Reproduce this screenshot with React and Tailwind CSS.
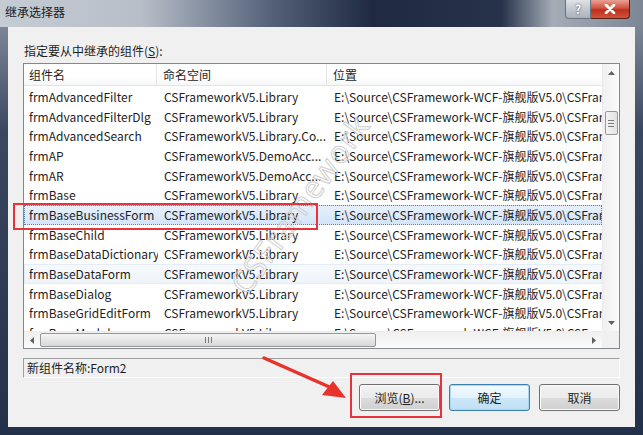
import React from 'react';

const rows = [
  ['frmAdvancedFilter', 'CSFrameworkV5.Library'],
  ['frmAdvancedFilterDlg', 'CSFrameworkV5.Library'],
  ['frmAdvancedSearch', 'CSFrameworkV5.Library.Co...'],
  ['frmAP', 'CSFrameworkV5.DemoAcc...'],
  ['frmAR', 'CSFrameworkV5.DemoAcc...'],
  ['frmBase', 'CSFrameworkV5.Library'],
  ['frmBaseBusinessForm', 'CSFrameworkV5.Library'],
  ['frmBaseChild', 'CSFrameworkV5.Library'],
  ['frmBaseDataDictionary', 'CSFrameworkV5.Library'],
  ['frmBaseDataForm', 'CSFrameworkV5.Library'],
  ['frmBaseDialog', 'CSFrameworkV5.Library'],
  ['frmBaseGridEditForm', 'CSFrameworkV5.Library'],
  ['frmBaseModule', 'CSFrameworkV5.Library'],
];

const path = 'E:\\Source\\CSFramework-WCF-旗舰版V5.0\\CSFramework\\';

const Button = ({ children, focused }) => (
  <div
    className={`w-[81px] h-[27px] rounded-[3px] border flex items-center justify-center text-[12px] text-[#1e1e1e] ${
      focused
        ? 'border-[#3c7fb1] bg-[linear-gradient(180deg,#f4fbff_0%,#e3f2fc_50%,#cde7f8_51%,#bfe0f6_100%)] shadow-[inset_0_0_0_1px_#a7d8f5]'
        : 'border-[#707070] bg-[linear-gradient(180deg,#f2f2f2_0%,#ebebeb_50%,#dddddd_51%,#cfcfcf_100%)] shadow-[inset_0_0_0_1px_#fbfbfb]'
    }`}
  >
    {children}
  </div>
);

const App = () => {
  return (
    <div className="relative w-[643px] h-[435px] overflow-hidden bg-[linear-gradient(180deg,#8c96a4_0%,#3a4760_30%,#22304a_100%)] flex flex-col font-['Noto_Sans_CJK_SC','Noto_Sans',sans-serif]">
      {/* title bar */}
      <div className="h-[27px] flex items-start bg-[linear-gradient(90deg,#c6ccd4_0%,#b7bec8_22%,#55627a_42%,#1f2a42_58%,#27334b_78%,#a4acb6_86%,#7c8694_100%)]">
        <div className="pl-[5px] pt-[4px] text-[12px] leading-[16px] text-[#1a1a1a]">继承选择器</div>
        <div className="flex-1" />
        <div className="flex mr-[13px]">
          <div className="w-[26px] h-[19px] rounded-bl-[4px] border border-t-0 border-[#6b7380] bg-[linear-gradient(180deg,#dfe3e8_0%,#c3c9d1_50%,#a9b1bc_100%)] flex items-center justify-center text-[12px] leading-none font-bold text-[#ffffff] [text-shadow:0_0_2px_#333]">
            ?
          </div>
          <div className="w-[39px] h-[19px] rounded-br-[4px] border border-t-0 border-l-0 border-[#5a2016] bg-[linear-gradient(180deg,#e8a093_0%,#d0533f_45%,#bb2f1c_55%,#d2553c_100%)] flex items-center justify-center">
            <svg width="12" height="10" viewBox="0 0 12 10">
              <path d="M2 1 L10 9 M10 1 L2 9" stroke="#ffffff" strokeWidth="2.6" strokeLinecap="round" />
            </svg>
          </div>
        </div>
      </div>

      {/* client */}
      <div className="flex-1 flex px-[8px] pb-[8px]">
        <div className="flex-1 bg-[#f0f0f0] flex flex-col px-[15px] pt-[16px] pb-[16px] text-[12px] text-[#1e1e1e]">
          <div className="leading-[16px] pl-[1px]">
            指定要从中继承的组件(<span className="underline">S</span>):
          </div>

          {/* list view */}
          <div className="mt-[4px] h-[286px] border border-[#828790] bg-white grid grid-cols-[1fr_17px] grid-rows-[1fr_17px]">
            <div className="relative overflow-hidden">
              <div className="h-[22px] flex border-b border-[#e5e5e5] bg-[linear-gradient(180deg,#ffffff_0%,#ffffff_60%,#f6f7f8_100%)] leading-[22px]">
                <div className="w-[133px] shrink-0 pl-[5px] border-r border-[#e5e5e5]">组件名</div>
                <div className="w-[170px] shrink-0 pl-[6px] border-r border-[#e5e5e5]">命名空间</div>
                <div className="flex-1 pl-[6px]">位置</div>
              </div>
              <div className="pt-[1px]">
                {rows.map(([name, ns], i) => {
                  const selected = i === 6;
                  const hover = i === 9;
                  return (
                    <div
                      key={name}
                      className={`h-[19.7px] flex items-center whitespace-nowrap border ${
                        selected
                          ? 'border-dotted border-[#5a7aa8] bg-[linear-gradient(180deg,#e6f0fc_0%,#d3e5fa_100%)]'
                          : hover
                          ? 'border-[#e3ecf7] bg-[linear-gradient(180deg,#f7fafd_0%,#eff4fb_100%)]'
                          : 'border-transparent'
                      }`}
                    >
                      <div className="w-[133px] shrink-0 pl-[4px] overflow-hidden">{name}</div>
                      <div className="w-[170px] shrink-0 pl-[6px] overflow-hidden">{ns}</div>
                      <div className="pl-[6px]">{path}</div>
                    </div>
                  );
                })}
              </div>
              {/* watermark */}
              <div className="absolute left-[170px] top-[125px] rotate-[-54deg] text-[31px] leading-none tracking-[1px] text-transparent [-webkit-text-stroke:1px_#d0d0d0] font-['Noto_Sans',sans-serif] pointer-events-none">
                CSFramework
              </div>
            </div>

            {/* vertical scrollbar */}
            <div className="flex flex-col items-center bg-[linear-gradient(90deg,#f0f0f0_0%,#fbfbfb_100%)] border-l border-[#ececec]">
              <div className="h-[17px] flex items-center justify-center">
                <svg width="7" height="4" viewBox="0 0 7 4"><path d="M0 4 L3.5 0 L7 4 Z" fill="#606060" /></svg>
              </div>
              <div className="mt-[30px] w-[13px] h-[24px] rounded-[2px] border border-[#979797] bg-[linear-gradient(90deg,#f4f4f4_0%,#e2e2e2_100%)] flex flex-col items-center justify-center gap-[2px]">
                <div className="w-[6px] h-[1px] bg-[#7a7a7a]" />
                <div className="w-[6px] h-[1px] bg-[#7a7a7a]" />
                <div className="w-[6px] h-[1px] bg-[#7a7a7a]" />
              </div>
              <div className="flex-1" />
              <div className="h-[17px] flex items-center justify-center">
                <svg width="7" height="4" viewBox="0 0 7 4"><path d="M0 0 L3.5 4 L7 0 Z" fill="#606060" /></svg>
              </div>
            </div>

            {/* horizontal scrollbar */}
            <div className="flex items-center bg-[linear-gradient(180deg,#f0f0f0_0%,#fbfbfb_100%)] border-t border-[#ececec]">
              <div className="w-[16px] flex items-center justify-center">
                <svg width="4" height="7" viewBox="0 0 4 7"><path d="M4 0 L0 3.5 L4 7 Z" fill="#606060" /></svg>
              </div>
              <div className="w-[336px] h-[14px] rounded-[2px] border border-[#979797] bg-[linear-gradient(180deg,#f4f4f4_0%,#e6e6e6_50%,#d8d8d8_100%)] flex items-center justify-center gap-[2px]">
                <div className="w-[1px] h-[6px] bg-[#7a7a7a]" />
                <div className="w-[1px] h-[6px] bg-[#7a7a7a]" />
                <div className="w-[1px] h-[6px] bg-[#7a7a7a]" />
              </div>
              <div className="flex-1" />
              <div className="w-[16px] flex items-center justify-center">
                <svg width="4" height="7" viewBox="0 0 4 7"><path d="M0 0 L4 3.5 L0 7 Z" fill="#606060" /></svg>
              </div>
            </div>
            <div className="bg-[#f0f0f0]" />
          </div>

          {/* status */}
          <div className="mt-[9px] h-[20px] border border-[#a0a0a0] border-b-white border-r-white flex items-center pl-[3px]">
            新组件名称:Form2
          </div>

          <div className="flex-1" />

          <div className="flex justify-end gap-[9px]">
            <Button>
              浏览(<span className="underline">B</span>)...
            </Button>
            <Button focused>确定</Button>
            <Button>取消</Button>
          </div>
        </div>
      </div>

      {/* annotations */}
      <div className="absolute left-[13px] top-[203px] w-[305px] h-[27px] border-2 border-[#e8333a]" />
      <div className="absolute left-[350px] top-[373px] w-[92px] h-[45px] border-2 border-[#e8333a]" />
      <svg className="absolute left-0 top-0 pointer-events-none" width="643" height="435" viewBox="0 0 643 435">
        <path d="M264 358 L334 389" stroke="#e8322c" strokeWidth="3.5" strokeLinecap="round" />
        <path d="M346 398 L322 395 L333 381 Z" fill="#e8322c" />
      </svg>
    </div>
  );
};

export default App;
